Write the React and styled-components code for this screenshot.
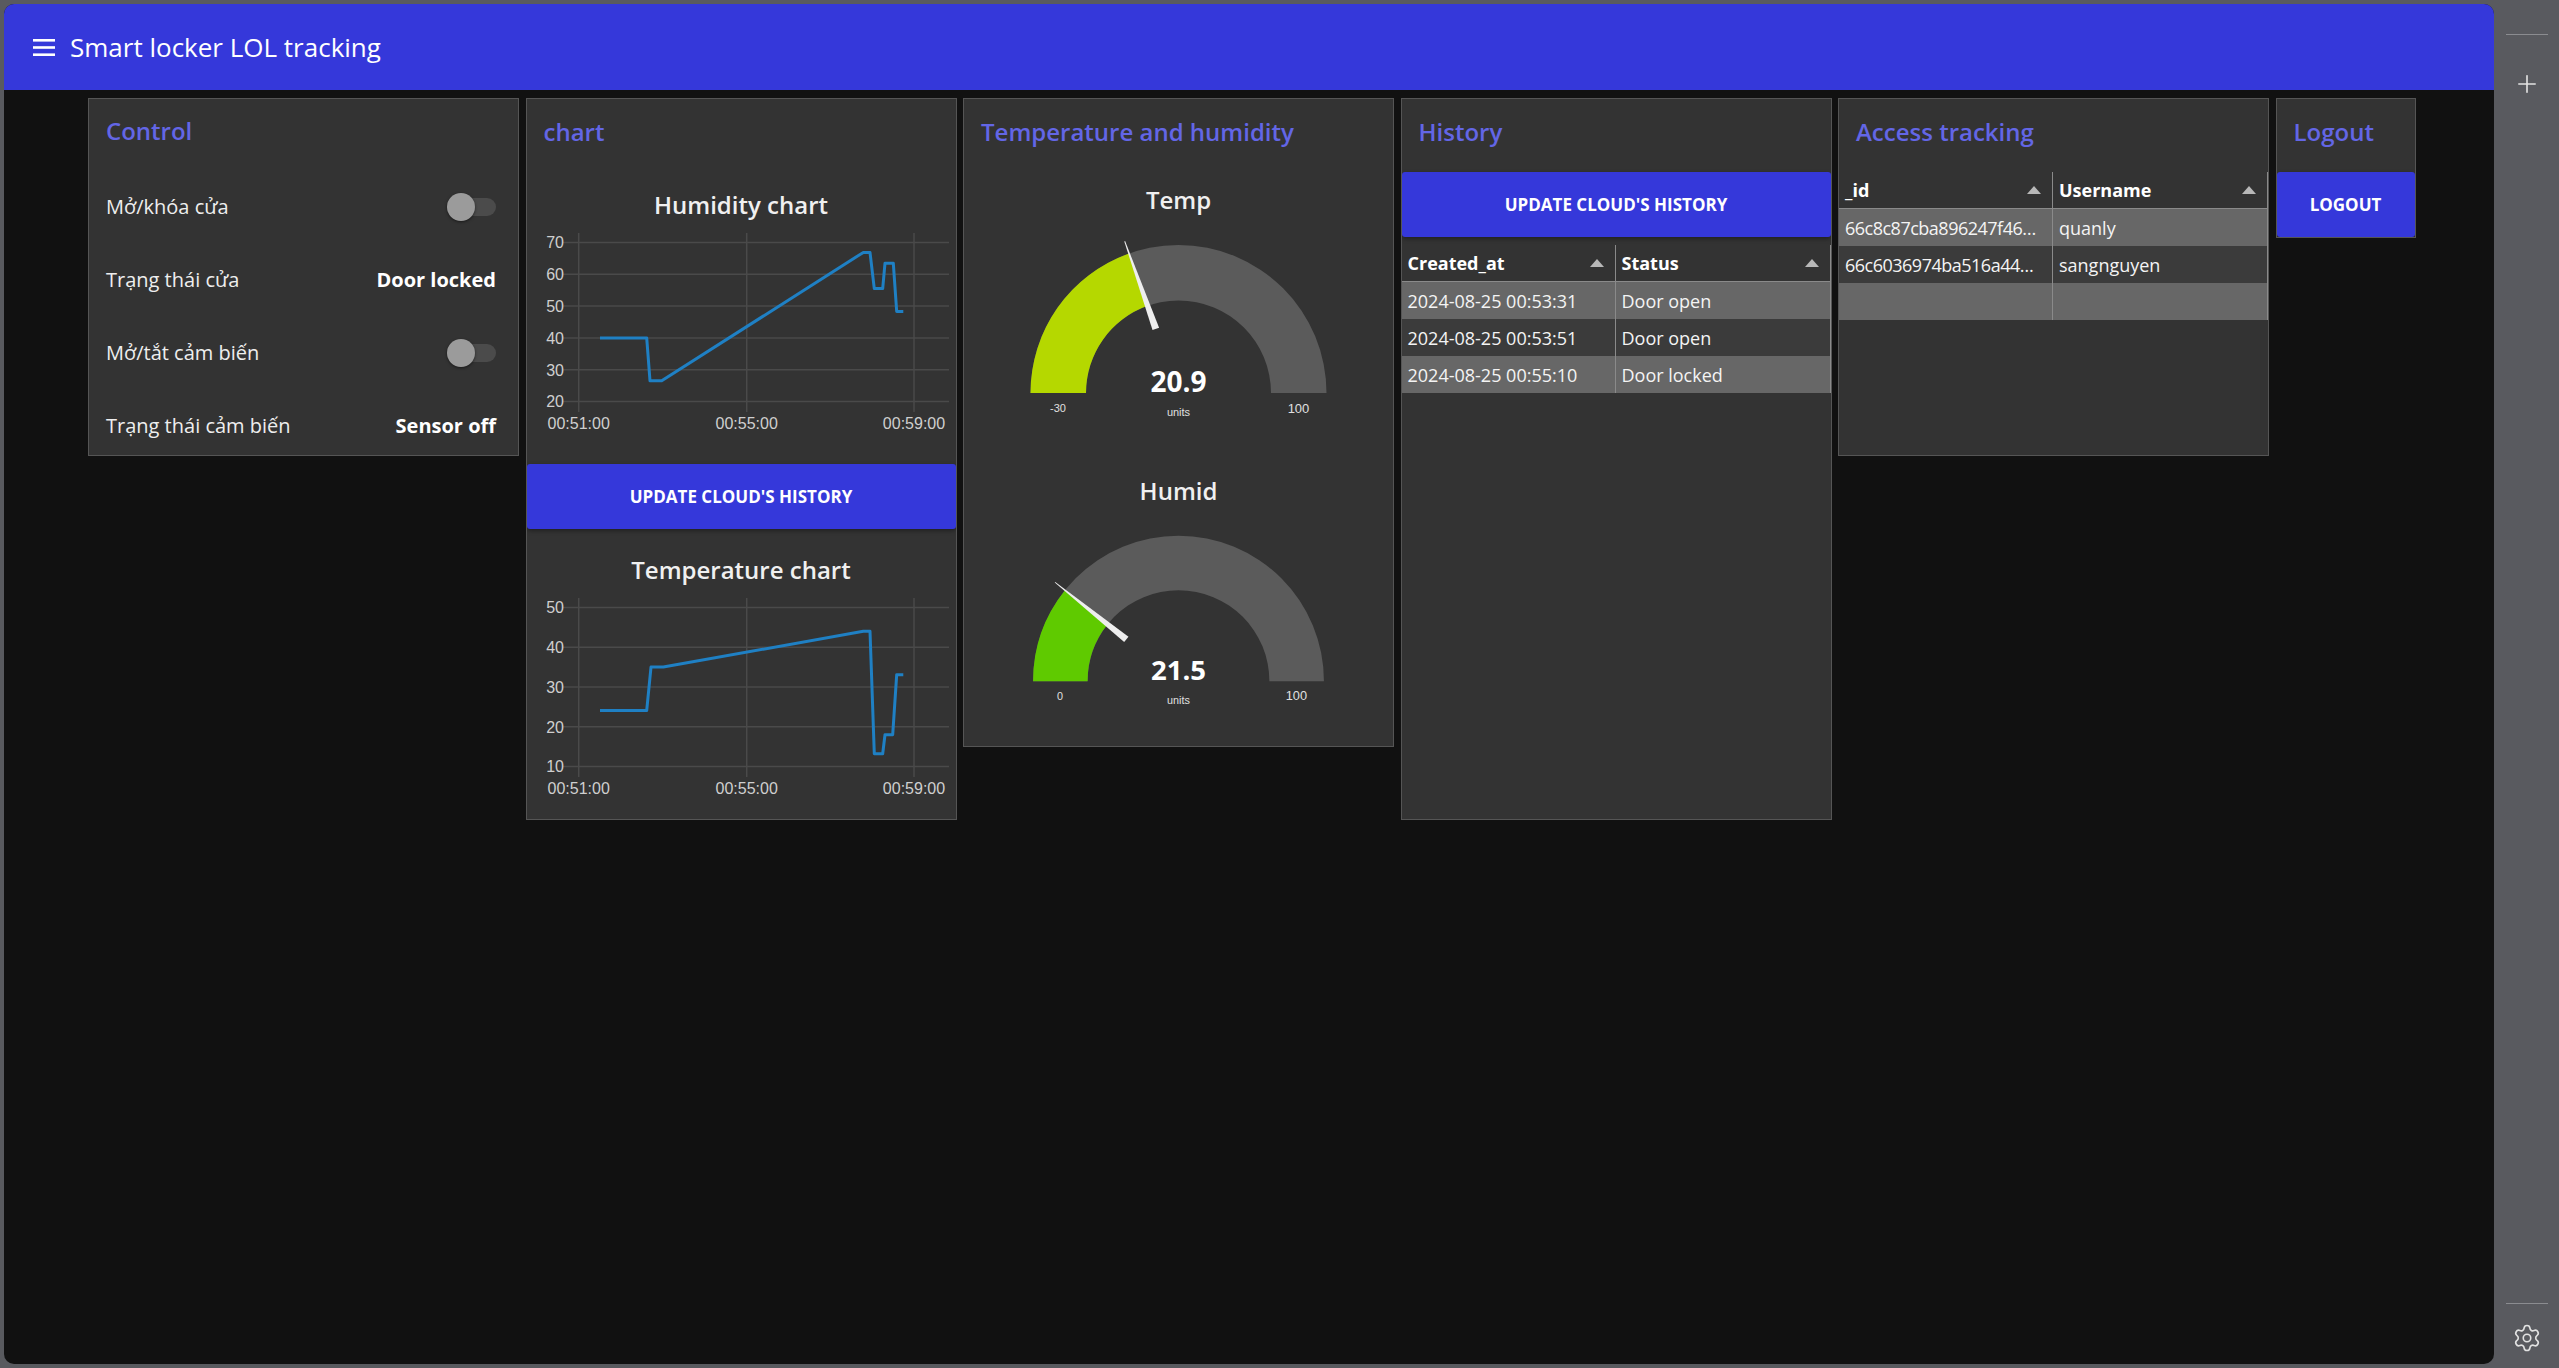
import React from 'react';
import styled, { createGlobalStyle } from 'styled-components';
import { Plus, Settings } from 'lucide-react';

const GlobalStyle = createGlobalStyle`
  html, body {
    margin: 0;
    padding: 0;
    background: #595a5f;
  }
  body {
    font-family: "Open Sans", "Noto Sans", sans-serif;
  }
  * {
    box-sizing: border-box;
  }
`;

const BLUE = '#3538da';

const Screen = styled.div`
  width: 2559px;
  height: 1368px;
  display: flex;
  background: #595a5f;
  overflow: hidden;
`;

const Panel = styled.div`
  width: 2490px;
  margin: 4px 0 4px 4px;
  background: #111111;
  border-radius: 10px;
  overflow: hidden;
  display: flex;
  flex-direction: column;
`;

const TopBar = styled.header`
  height: 86px;
  flex-shrink: 0;
  background: ${BLUE};
  display: flex;
  align-items: center;
  gap: 15px;
  padding-left: 29px;
  color: #fff;
`;

const AppTitle = styled.h1`
  margin: 0;
  font-size: 26px;
  font-weight: 400;
  line-height: 1;
`;

const Board = styled.main`
  display: flex;
  align-items: flex-start;
  gap: 6.5px;
  padding: 8px 0 0 84px;
`;

const Card = styled.section`
  width: ${p => p.$w || 431}px;
  height: ${p => p.$h}px;
  background: #333333;
  border: 1px solid #555555;
  display: flex;
  flex-direction: column;
  overflow: hidden;
`;

const CardTitle = styled.h2`
  margin: 0;
  height: ${p => p.$h || 73}px;
  flex-shrink: 0;
  display: flex;
  align-items: center;
  padding: 0 0 8px 17px;
  font-size: 24px;
  font-weight: 600;
  color: #6366e6;
`;

const Row = styled.div`
  height: 73px;
  flex-shrink: 0;
  display: flex;
  align-items: center;
  justify-content: space-between;
  padding: 0 22px 0 17px;
  font-size: 20px;
  color: #eeeeee;
`;

const Value = styled.span`
  font-weight: 700;
  color: #ffffff;
`;

const Track = styled.div`
  position: relative;
  width: 48px;
  height: 18px;
  border-radius: 9px;
  background: #4b4b4b;
`;

const Knob = styled.span`
  position: absolute;
  left: -1px;
  top: -5px;
  width: 28px;
  height: 28px;
  border-radius: 50%;
  background: #9b9b9b;
  box-shadow: 0 1px 3px rgba(0, 0, 0, 0.5);
`;

const Button = styled.button`
  height: 65px;
  flex-shrink: 0;
  width: 100%;
  border: none;
  border-radius: 3px;
  background: ${BLUE};
  color: #fff;
  font-family: inherit;
  font-size: 17px;
  font-weight: 700;
  text-transform: uppercase;
  box-shadow: 0 2px 4px rgba(0, 0, 0, 0.35);
  cursor: pointer;
`;

const Block = styled.div`
  height: ${p => p.$h}px;
  flex-shrink: 0;
  padding-top: ${p => p.$pt || 0}px;
  display: flex;
  flex-direction: column;
  align-items: center;
`;

const BlockTitle = styled.div`
  margin-top: ${p => p.$mt || 0}px;
  height: ${p => p.$lh || 40}px;
  line-height: ${p => p.$lh || 40}px;
  font-size: 24px;
  font-weight: 600;
  color: #f0f0f0;
`;

const Table = styled.div`
  display: grid;
  grid-template-columns: 214px 215px;
  margin-top: ${p => p.$mt || 0}px;
`;

const HeadCell = styled.div`
  height: 37px;
  display: flex;
  align-items: center;
  justify-content: space-between;
  padding: 0 11px 0 6px;
  font-size: 18px;
  font-weight: 700;
  color: #fff;
  border-right: 1px solid #8a8a8a;
  border-bottom: 1px solid #8a8a8a;
`;

const SortArrow = styled.span`
  width: 0;
  height: 0;
  border-left: 7px solid transparent;
  border-right: 7px solid transparent;
  border-bottom: 8px solid #b8b8b8;
`;

const Cell = styled.div`
  height: 37px;
  display: flex;
  align-items: center;
  padding: 0 6px;
  font-size: 18px;
  color: #f4f4f4;
  white-space: nowrap;
  overflow: hidden;
  letter-spacing: ${p => (p.$tight ? '-0.5px' : '0')};
  background: ${p => (p.$light ? '#676767' : '#3b3b3b')};
  border-right: 1px solid #8a8a8a;
`;

const SideBar = styled.aside`
  flex: 1;
  display: flex;
  flex-direction: column;
  align-items: center;
  padding: 34px 0 15px;
  color: #e2e2e2;
`;

const SideRule = styled.div`
  width: 42px;
  height: 1px;
  background: #8b8c90;
  margin-bottom: ${p => p.$mb}px;
`;

const Spacer = styled.div`
  flex: 1;
`;

const Hamburger = () => (
  <svg width="22" height="17" viewBox="0 0 22 17">
    <rect x="0" y="0" width="22" height="2.6" fill="#fff" />
    <rect x="0" y="7.2" width="22" height="2.6" fill="#fff" />
    <rect x="0" y="14.4" width="22" height="2.6" fill="#fff" />
  </svg>
);

const Toggle = () => (
  <Track>
    <Knob />
  </Track>
);

const AXIS_X = [51.7, 219.7, 387];
const AXIS_LABELS = ['00:51:00', '00:55:00', '00:59:00'];

const LineChart = ({ max, min, step, points }) => {
  const top = 17.5;
  const bottom = 176.5;
  const y = v => top + ((max - v) / (max - min)) * (bottom - top);
  const ticks = [];
  for (let v = max; v >= min; v -= step) ticks.push(v);
  const line = points.map(([x, v]) => `${x},${y(v).toFixed(1)}`).join(' ');
  return (
    <svg width="429" height="215" viewBox="0 0 429 215">
      {ticks.map(v => (
        <line key={v} x1="36" x2="422" y1={y(v)} y2={y(v)} stroke="#4a4a4a" strokeWidth="1.5" />
      ))}
      {AXIS_X.map(x => (
        <line key={x} x1={x} x2={x} y1="8" y2="187" stroke="#4a4a4a" strokeWidth="1.5" />
      ))}
      {ticks.map(v => (
        <text key={'t' + v} x="37" y={y(v) + 5.8} textAnchor="end" fill="#cfcfcf"
          fontFamily="Liberation Sans, Arial, sans-serif" fontSize="16">{v}</text>
      ))}
      {AXIS_X.map((x, i) => (
        <text key={'x' + x} x={x} y="204" textAnchor="middle" fill="#cfcfcf"
          fontFamily="Liberation Sans, Arial, sans-serif" fontSize="16">{AXIS_LABELS[i]}</text>
      ))}
      <polyline points={line} fill="none" stroke="#1f80c4" strokeWidth="3" strokeLinejoin="round" />
    </svg>
  );
};

const Gauge = ({ value, min, max, color }) => {
  const cx = 214.5;
  const cy = 165;
  const R = 148;
  const r = 92.5;
  const f = (value - min) / (max - min);
  const a = Math.PI * (1 - f);
  const pt = (rad, ang) => [cx + rad * Math.cos(ang), cy - rad * Math.sin(ang)];
  const [ox, oy] = pt(R, a);
  const [ix, iy] = pt(r, a);
  const track = `M ${cx - R} ${cy} A ${R} ${R} 0 0 1 ${cx + R} ${cy} L ${cx + r} ${cy} A ${r} ${r} 0 0 0 ${cx - r} ${cy} Z`;
  const fill = `M ${cx - R} ${cy} A ${R} ${R} 0 0 1 ${ox} ${oy} L ${ix} ${iy} A ${r} ${r} 0 0 0 ${cx - r} ${cy} Z`;
  const p = a + Math.PI / 2;
  const off = (q, w, s) => [q[0] + s * w * Math.cos(p), q[1] - s * w * Math.sin(p)];
  const base = pt(68, a);
  const tip = pt(161, a);
  const needle = [off(base, 3.5, 1), off(tip, 0.4, 1), off(tip, 0.4, -1), off(base, 3.5, -1)]
    .map(q => q.map(n => n.toFixed(1)).join(','))
    .join(' ');
  return (
    <svg width="429" height="231" viewBox="0 0 429 231">
      <path d={track} fill="#5b5b5b" />
      <path d={fill} fill={color} />
      <polygon points={needle} fill="#eeeeee" />
      <text x={cx} y={cy - 1} textAnchor="middle" fill="#fff" fontFamily="Open Sans, sans-serif"
        fontWeight="700" fontSize="28">{value.toFixed(1)}</text>
      <text x={cx} y={cy + 23} textAnchor="middle" fill="#e0e0e0"
        fontFamily="Liberation Sans, Arial, sans-serif" fontSize="11">units</text>
      <text x={cx - 120.5} y={cy + 19} textAnchor="middle" fill="#e0e0e0"
        fontFamily="Liberation Sans, Arial, sans-serif" fontSize="11">{min}</text>
      <text x={cx + 120} y={cy + 19.5} textAnchor="middle" fill="#e0e0e0"
        fontFamily="Liberation Sans, Arial, sans-serif" fontSize="13">{max}</text>
    </svg>
  );
};

const humidity = [
  [73, 40], [119.7, 40], [123, 26.5], [134.7, 26.5], [336.3, 66.9], [343, 66.9],
  [347.3, 55.5], [355.7, 55.5], [358, 63.5], [366.3, 63.5], [369.7, 48.3], [376.3, 48.3],
];

const temperature = [
  [73, 24.1], [119.7, 24.1], [124, 35], [136.3, 35], [336.3, 44], [343, 44],
  [347.3, 13.2], [355.7, 13.2], [358, 18], [365.7, 18], [369.7, 33.1], [376.3, 33.1],
];

const history = [
  ['2024-08-25 00:53:31', 'Door open'],
  ['2024-08-25 00:53:51', 'Door open'],
  ['2024-08-25 00:55:10', 'Door locked'],
];

const users = [
  ['66c8c87cba896247f46…', 'quanly'],
  ['66c6036974ba516a44…', 'sangnguyen'],
  ['', ''],
];

const App = () => (
  <Screen>
    <GlobalStyle />
    <Panel>
      <TopBar>
        <Hamburger />
        <AppTitle>Smart locker LOL tracking</AppTitle>
      </TopBar>
      <Board>
        <Card $h={358}>
          <CardTitle $h={71}>Control</CardTitle>
          <Row>
            <span>Mở/khóa cửa</span>
            <Toggle />
          </Row>
          <Row>
            <span>Trạng thái cửa</span>
            <Value>Door locked</Value>
          </Row>
          <Row>
            <span>Mở/tắt cảm biến</span>
            <Toggle />
          </Row>
          <Row>
            <span>Trạng thái cảm biến</span>
            <Value>Sensor off</Value>
          </Row>
        </Card>

        <Card $h={722}>
          <CardTitle>chart</CardTitle>
          <Block $h={292}>
            <BlockTitle $mt={13}>Humidity chart</BlockTitle>
            <LineChart max={70} min={20} step={10} points={humidity} />
          </Block>
          <Button>Update cloud's history</Button>
          <Block $h={291}>
            <BlockTitle $mt={21}>Temperature chart</BlockTitle>
            <LineChart max={50} min={10} step={10} points={temperature} />
          </Block>
        </Card>

        <Card $h={649}>
          <CardTitle>Temperature and humidity</CardTitle>
          <Block $h={287}>
            <BlockTitle $lh={56}>Temp</BlockTitle>
            <Gauge value={20.9} min={-30} max={100} color="#b5d800" />
          </Block>
          <Block $h={287} $pt={4}>
            <BlockTitle $lh={56}>Humid</BlockTitle>
            <Gauge value={21.5} min={0} max={100} color="#5fca00" />
          </Block>
        </Card>

        <Card $h={722}>
          <CardTitle>History</CardTitle>
          <Button>Update cloud's history</Button>
          <Table $mt={8}>
            <HeadCell>Created_at<SortArrow /></HeadCell>
            <HeadCell>Status<SortArrow /></HeadCell>
            {history.map(([at, status], i) => (
              <React.Fragment key={at}>
                <Cell $light={i % 2 === 0}>{at}</Cell>
                <Cell $light={i % 2 === 0}>{status}</Cell>
              </React.Fragment>
            ))}
          </Table>
        </Card>

        <Card $h={358}>
          <CardTitle>Access tracking</CardTitle>
          <Table>
            <HeadCell>_id<SortArrow /></HeadCell>
            <HeadCell>Username<SortArrow /></HeadCell>
            {users.map(([id, name], i) => (
              <React.Fragment key={i}>
                <Cell $light={i % 2 === 0} $tight>{id}</Cell>
                <Cell $light={i % 2 === 0}>{name}</Cell>
              </React.Fragment>
            ))}
          </Table>
        </Card>

        <Card $w={140} $h={140}>
          <CardTitle>Logout</CardTitle>
          <Button>Logout</Button>
        </Card>
      </Board>
    </Panel>
    <SideBar>
      <SideRule $mb={35} />
      <Plus size={28} strokeWidth={1.4} />
      <Spacer />
      <SideRule $mb={19} />
      <Settings size={30} strokeWidth={1.3} />
    </SideBar>
  </Screen>
);

export default App;
